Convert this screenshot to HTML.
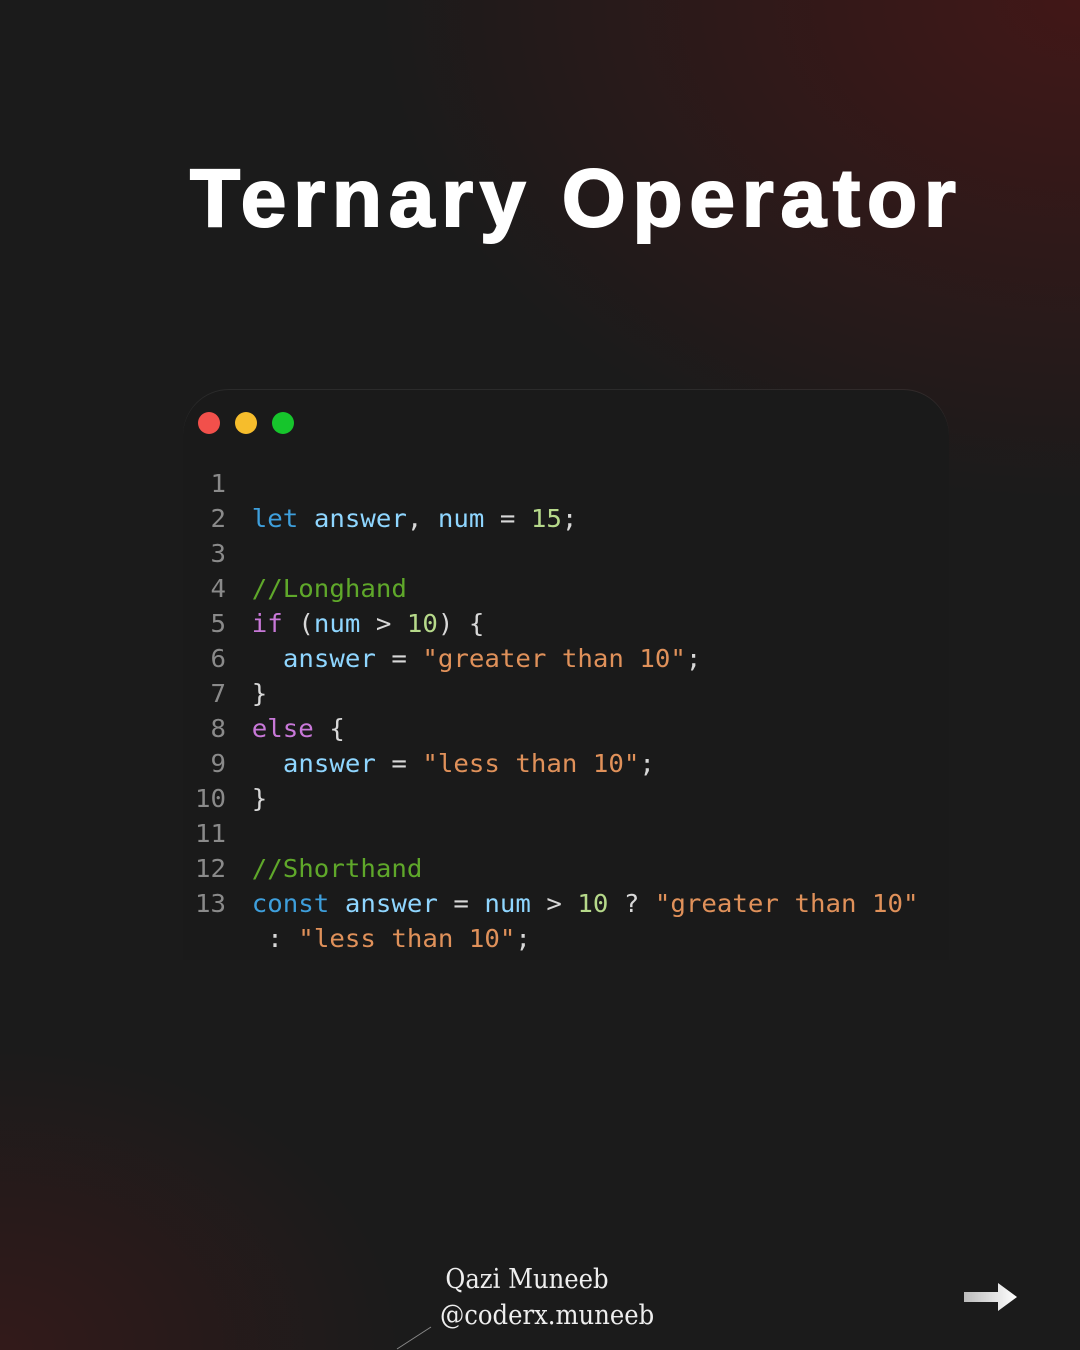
<!DOCTYPE html>
<html><head><meta charset="utf-8"><style>
*{margin:0;padding:0;box-sizing:border-box}
body{width:1080px;height:1350px;overflow:hidden;background:#1b1b1b;position:relative;font-family:"Liberation Sans",sans-serif}
.bg{position:absolute;inset:0;background:
radial-gradient(ellipse 700px 500px at 1080px 0px,rgba(75,22,22,.8),rgba(60,20,20,0) 100%),
radial-gradient(ellipse 400px 300px at 0px 1350px,rgba(70,25,25,.55),rgba(0,0,0,0) 100%)}
h1{position:absolute;left:190px;top:152px;font-size:82px;font-weight:bold;color:#fff;letter-spacing:6.8px;white-space:nowrap;-webkit-text-stroke:2px #fff}
.card{position:absolute;left:183px;top:390px;width:766px;height:570px;border-radius:46px 46px 0 0;background:#1a1a1a;box-shadow:0 -1px 0 rgba(255,255,255,.07)}
.dot{position:absolute;top:412px;width:22px;height:22px;border-radius:50%}
pre{position:absolute;left:190px;top:466px;font-family:"DejaVu Sans Mono","Liberation Mono",monospace;font-size:25px;line-height:35px;color:#d8d8d8;transform:scaleX(1.03);transform-origin:0 0}
.n{color:#8a8a8a;display:inline-block;width:35px;text-align:right;margin-right:25px}
.k{color:#3e9fdc}.v{color:#8fd6ff}.g{color:#5fa82a}.p{color:#c878d8}.s{color:#e0915a}.m{color:#b6d98a}
.sig{position:absolute;left:440px;top:1262px;font-family:"DejaVu Serif","Liberation Serif",serif;font-size:27px;color:#eee;line-height:36px;transform:scaleX(.9);transform-origin:0 0}
</style></head><body>
<div class="bg"></div>
<h1>Ternary Operator</h1>
<div class="card"></div>
<div class="dot" style="left:198px;background:#f2504b"></div>
<div class="dot" style="left:235px;background:#f6bd2c"></div>
<div class="dot" style="left:272px;background:#16c52c"></div>
<pre><span class="n">1</span>
<span class="n">2</span><span class="k">let</span> <span class="v">answer</span>, <span class="v">num</span> = <span class="m">15</span>;
<span class="n">3</span>
<span class="n">4</span><span class="g">//Longhand</span>
<span class="n">5</span><span class="p">if</span> (<span class="v">num</span> &gt; <span class="m">10</span>) {
<span class="n">6</span>  <span class="v">answer</span> = <span class="s">"greater than 10"</span>;
<span class="n">7</span>}
<span class="n">8</span><span class="p">else</span> {
<span class="n">9</span>  <span class="v">answer</span> = <span class="s">"less than 10"</span>;
<span class="n">10</span>}
<span class="n">11</span>
<span class="n">12</span><span class="g">//Shorthand</span>
<span class="n">13</span><span class="k">const</span> <span class="v">answer</span> = <span class="v">num</span> &gt; <span class="m">10</span> ? <span class="s">"greater than 10"</span>
<span class="n"></span> : <span class="s">"less than 10"</span>;</pre>
<div class="sig"><div style="margin-left:6px">Qazi Muneeb</div><div>@coderx.muneeb</div></div>
<svg style="position:absolute;left:395px;top:1325px" width="40" height="25"><line x1="2" y1="24" x2="36" y2="2" stroke="#888" stroke-width="1"/></svg>
<svg style="position:absolute;left:962px;top:1282px" width="58" height="32"><defs><linearGradient id="a" x1="0" x2="1"><stop offset="0" stop-color="#bbb"/><stop offset="1" stop-color="#fff"/></linearGradient></defs><path d="M2 10H36V1L55 15L36 29V20H2Z" fill="url(#a)"/></svg>
</body></html>
